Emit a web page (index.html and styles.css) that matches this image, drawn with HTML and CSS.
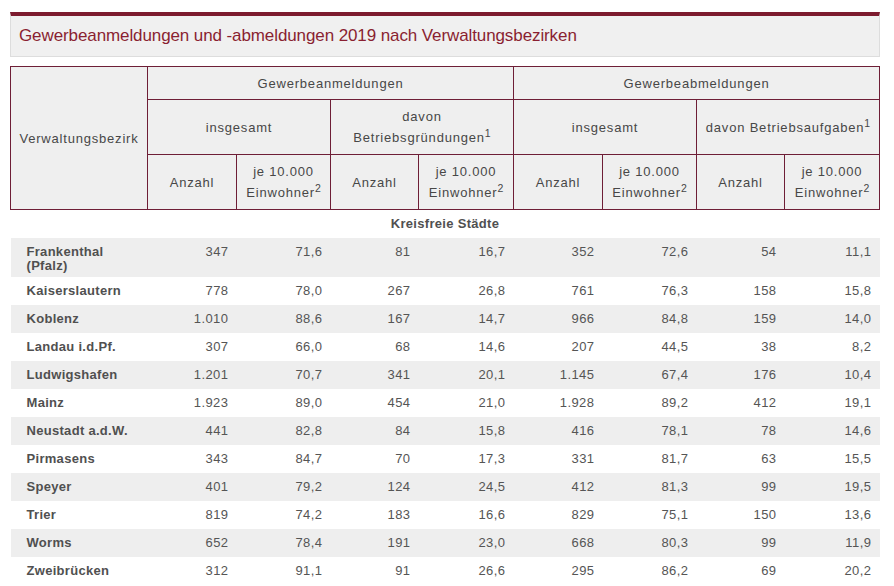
FILE: index.html
```html
<!DOCTYPE html>
<html lang="de">
<head>
<meta charset="utf-8">
<title>Gewerbeanmeldungen und -abmeldungen 2019</title>
<link rel="stylesheet" href="styles.css">
</head>
<body>
<div class="page">
  <div class="title-box">
    <h1 class="title">Gewerbeanmeldungen und -abmeldungen 2019 nach Verwaltungsbezirken</h1>
  </div>
  <table class="data">
    <colgroup>
      <col class="c-name">
      <col class="c-a"><col class="c-b"><col class="c-a2"><col class="c-b2">
      <col class="c-a"><col class="c-b"><col class="c-a2"><col class="c-b2">
    </colgroup>
    <thead>
      <tr class="h1">
        <th rowspan="3">Verwaltungsbezirk</th>
        <th colspan="4">Gewerbeanmeldungen</th>
        <th colspan="4">Gewerbeabmeldungen</th>
      </tr>
      <tr class="h2">
        <th colspan="2">insgesamt</th>
        <th colspan="2">davon<br>Betriebsgründungen<sup>1</sup></th>
        <th colspan="2">insgesamt</th>
        <th colspan="2">davon Betriebsaufgaben<sup>1</sup></th>
      </tr>
      <tr class="h3">
        <th>Anzahl</th>
        <th>je 10.000<br>Einwohner<sup>2</sup></th>
        <th>Anzahl</th>
        <th>je 10.000<br>Einwohner<sup>2</sup></th>
        <th>Anzahl</th>
        <th>je 10.000<br>Einwohner<sup>2</sup></th>
        <th>Anzahl</th>
        <th>je 10.000<br>Einwohner<sup>2</sup></th>
      </tr>
    </thead>
    <tbody>
      <tr class="group"><td colspan="9">Kreisfreie Städte</td></tr>
      <tr class="alt"><td class="name">Frankenthal<br>(Pfalz)</td><td>347</td><td>71,6</td><td>81</td><td>16,7</td><td>352</td><td>72,6</td><td>54</td><td>11,1</td></tr>
      <tr><td class="name">Kaiserslautern</td><td>778</td><td>78,0</td><td>267</td><td>26,8</td><td>761</td><td>76,3</td><td>158</td><td>15,8</td></tr>
      <tr class="alt"><td class="name">Koblenz</td><td>1.010</td><td>88,6</td><td>167</td><td>14,7</td><td>966</td><td>84,8</td><td>159</td><td>14,0</td></tr>
      <tr><td class="name">Landau i.d.Pf.</td><td>307</td><td>66,0</td><td>68</td><td>14,6</td><td>207</td><td>44,5</td><td>38</td><td>8,2</td></tr>
      <tr class="alt"><td class="name">Ludwigshafen</td><td>1.201</td><td>70,7</td><td>341</td><td>20,1</td><td>1.145</td><td>67,4</td><td>176</td><td>10,4</td></tr>
      <tr><td class="name">Mainz</td><td>1.923</td><td>89,0</td><td>454</td><td>21,0</td><td>1.928</td><td>89,2</td><td>412</td><td>19,1</td></tr>
      <tr class="alt"><td class="name">Neustadt a.d.W.</td><td>441</td><td>82,8</td><td>84</td><td>15,8</td><td>416</td><td>78,1</td><td>78</td><td>14,6</td></tr>
      <tr><td class="name">Pirmasens</td><td>343</td><td>84,7</td><td>70</td><td>17,3</td><td>331</td><td>81,7</td><td>63</td><td>15,5</td></tr>
      <tr class="alt"><td class="name">Speyer</td><td>401</td><td>79,2</td><td>124</td><td>24,5</td><td>412</td><td>81,3</td><td>99</td><td>19,5</td></tr>
      <tr><td class="name">Trier</td><td>819</td><td>74,2</td><td>183</td><td>16,6</td><td>829</td><td>75,1</td><td>150</td><td>13,6</td></tr>
      <tr class="alt"><td class="name">Worms</td><td>652</td><td>78,4</td><td>191</td><td>23,0</td><td>668</td><td>80,3</td><td>99</td><td>11,9</td></tr>
      <tr><td class="name">Zweibrücken</td><td>312</td><td>91,1</td><td>91</td><td>26,6</td><td>295</td><td>86,2</td><td>69</td><td>20,2</td></tr>
    </tbody>
  </table>
</div>
</body>
</html>
```
FILE: styles.css
```css
html, body {
  margin: 0;
  padding: 0;
  background: #ffffff;
}

body {
  font-family: "Liberation Sans", Arial, sans-serif;
  color: #555555;
}

.page {
  width: 870px;
  padding: 12px 0 0 10px;
}

.title-box {
  border-top: 4px solid #7d1b2e;
  background: #f0f0f0;
  border-left: 1px solid #dddddd;
  border-right: 1px solid #dddddd;
  border-bottom: 1px solid #dddddd;
  padding: 10px 8px;
}

.title {
  margin: 0;
  font-size: 17px;
  line-height: 20px;
  font-weight: normal;
  color: #8a1f31;
  letter-spacing: -0.1px;
}

.data {
  margin-top: 9px;
  width: 870px;
  table-layout: fixed;
  border-collapse: collapse;
  font-size: 13px;
  letter-spacing: 0.45px;
}

.c-name { width: 137px; }
.c-a { width: 89px; }
.c-b { width: 94px; }
.c-a2 { width: 88px; }
.c-b2 { width: 95px; }

.data th {
  background: #efefef;
  border: 1px solid #6e1e36;
  font-weight: normal;
  color: #474747;
  line-height: 21px;
  padding: 0 2px;
  vertical-align: middle;
  text-align: center;
  letter-spacing: 0.8px;
}

.data tr.h1 th { height: 32px; }
.data tr.h2 th { height: 54px; }
.data tr.h3 th { height: 54px; }

.data sup {
  font-size: 10.5px;
  line-height: 0;
  vertical-align: 5px;
  letter-spacing: 0;
}

.data td {
  padding: 7px 8px 7px 0;
  line-height: 14px;
  text-align: right;
  vertical-align: top;
  color: #555555;
}

.data td.name {
  text-align: left;
  font-weight: bold;
  padding: 7px 4px 4px 16px;
  letter-spacing: 0.3px;
  color: #505050;
}

.data tr.alt td {
  background: #eeeeee;
}

.data tr.group td {
  text-align: center;
  font-weight: bold;
  letter-spacing: 0.3px;
  padding: 7px 0;
  color: #505050;
}
```
